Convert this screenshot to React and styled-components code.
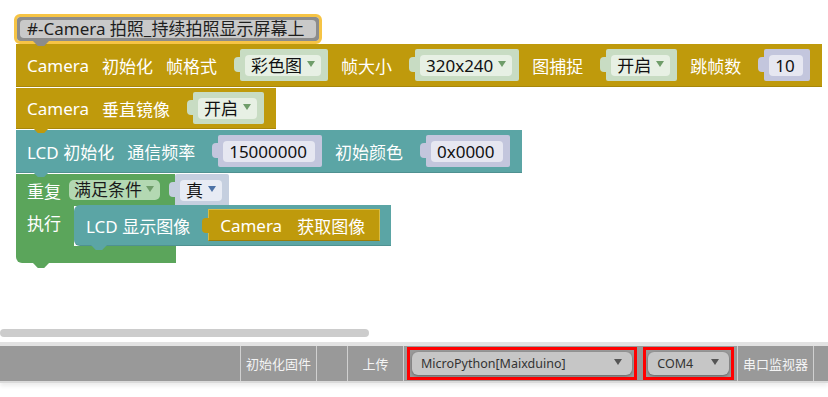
import React from 'react';
import styled, { createGlobalStyle } from 'styled-components';

const GlobalStyle = createGlobalStyle`
    body {
        margin: 0;
        background: #ffffff;
        font-family: "Noto Sans", "Noto Sans CJK SC", sans-serif;
    }
`;

const GOLD = '#BF9A0C';
const TEAL = '#5BA5A5';
const GREEN = '#5BA55B';

const Page = styled.div`
    width: 828px;
    height: 397px;
    overflow: hidden;
    background: #fff;
`;

const Workspace = styled.div`
    position: relative;
    height: 342px;
`;

const Stack = styled.div`
    position: absolute;
    left: 16px;
    top: 17px;
    display: flex;
    flex-direction: column;
    align-items: flex-start;
`;

const Tab = styled.span`
    position: absolute;
    left: ${(p) => p.$left || 17}px;
    bottom: -5px;
    width: 16px;
    height: 5px;
    background: ${(p) => p.$color};
    clip-path: polygon(0 0, 100% 0, 70% 100%, 30% 100%);
    z-index: 2;
`;

const CommentBlock = styled.div`
    position: relative;
    margin-left: 1px;
    margin-bottom: 3px;
    width: 302px;
    height: 24px;
    background: #8c8c8c;
    outline: 3px solid #f6c445;
    border-radius: 3px;
    display: flex;
    align-items: center;
    padding: 0 3px;
    box-sizing: border-box;
    z-index: 3;
`;

const CommentField = styled.div`
    flex: 1;
    height: 18px;
    line-height: 18px;
    background: #c9c9c9;
    border-radius: 4px;
    padding-left: 7px;
    font-size: 17px;
    color: #1e1e1e;
    white-space: nowrap;
`;

const Block = styled.div`
    position: relative;
    height: ${(p) => p.$h}px;
    background: ${(p) => p.$color};
    display: flex;
    align-items: center;
    gap: 13px;
    padding: 0 12px 0 11px;
    margin-bottom: ${(p) => p.$mb || 0}px;
    border-bottom: 1px solid rgba(0, 0, 0, 0.12);
    box-sizing: border-box;
    color: #fff;
    font-size: 17px;
    white-space: nowrap;
`;

const Label = styled.span`
    color: #fff;
`;

const Plug = styled.div`
    position: relative;
    height: ${(p) => p.$h || 32}px;
    background: ${(p) => p.$bg};
    display: flex;
    align-items: center;
    padding: 0 7px 0 5px;
    margin-left: ${(p) => p.$ml ?? 10}px;
    border-radius: 2px;
    box-sizing: border-box;

    &::before {
        content: '';
        position: absolute;
        left: -6px;
        top: 8px;
        width: 7px;
        height: 15px;
        background: ${(p) => p.$bg};
        border-radius: 4px 0 0 4px;
    }
`;

const Field = styled.div`
    height: 21px;
    line-height: 21px;
    background: ${(p) => p.$bg};
    border-radius: 4px;
    padding: 0 ${(p) => (p.$arrow ? 6 : 8)}px 0 6px;
    color: #111;
    font-size: 17px;
    display: flex;
    align-items: center;
    gap: 5px;
`;

const Arrow = styled.span`
    width: 0;
    height: 0;
    border-left: 4px solid transparent;
    border-right: 4px solid transparent;
    border-top: 6px solid ${(p) => p.$color};
    margin-top: -3px;
`;

const ReporterBlock = styled.div`
    position: relative;
    height: 32px;
    background: ${GOLD};
    border: 1px solid #d8bb45;
    border-bottom-color: #9c7d08;
    display: flex;
    align-items: center;
    gap: 15px;
    padding: 0 14px 0 11px;
    margin-left: 8px;
    box-sizing: border-box;
    color: #fff;
    font-size: 17px;

    &::before {
        content: '';
        position: absolute;
        left: -7px;
        top: 8px;
        width: 7px;
        height: 15px;
        background: ${GOLD};
        border-radius: 4px 0 0 4px;
    }
`;

const Repeat = styled.div`
    position: relative;
    display: flex;
    flex-direction: column;
    align-items: flex-start;
`;

const RepeatTop = styled.div`
    display: flex;
    align-items: flex-start;
`;

const GreenCap = styled.div`
    height: 32px;
    background: ${GREEN};
    display: flex;
    align-items: center;
    gap: 8px;
    padding: 0 15px 0 11px;
    color: #fff;
    font-size: 17px;
`;

const GreenField = styled.div`
    height: 20px;
    line-height: 20px;
    background: #b3d8b2;
    border-radius: 5px;
    padding: 0 6px 0 5px;
    color: #1a1a1a;
    font-size: 17px;
    display: flex;
    align-items: center;
    gap: 4px;
`;

const RepeatMiddle = styled.div`
    display: flex;
    margin-top: -2px;
`;

const Arm = styled.div`
    width: 58px;
    height: 41px;
    background: ${GREEN};
    color: #fff;
    font-size: 17px;
    padding: 5px 0 0 11px;
    box-sizing: border-box;
`;

const InnerBlock = styled(Block)`
    border-radius: 6px 0 0 6px;
    padding-left: 12px;
    gap: 10px;
    padding-right: 11px;
`;

const RepeatBottom = styled.div`
    position: relative;
    width: 160px;
    height: 17px;
    background: ${GREEN};
    border-radius: 0 0 0 6px;
`;

const Scrollbar = styled.div`
    position: absolute;
    left: 0;
    bottom: 5px;
    width: 369px;
    height: 8px;
    border-radius: 4px;
    background: #cccccc;
`;

const Toolbar = styled.div`
    height: 41px;
    box-sizing: border-box;
    border-top: 4px solid #e2e2e2;
    border-bottom: 2px solid #dadada;
    background: #999999;
    display: flex;
    justify-content: flex-end;
    box-shadow: 0 3px 4px rgba(0, 0, 0, 0.08);
`;

const Cell = styled.div`
    width: ${(p) => p.$w}px;
    border-left: ${(p) => (p.$sep ? '1px solid #d0d0d0' : 'none')};
    display: flex;
    align-items: center;
    justify-content: ${(p) => p.$justify || 'center'};
    gap: 6px;
    padding: 0 ${(p) => p.$pad || 0}px;
    box-sizing: border-box;
    color: #f4f4f4;
    font-size: 13px;
    font-family: "Noto Sans CJK SC", sans-serif;
`;

const RedBox = styled.div`
    width: ${(p) => p.$w}px;
    height: 33px;
    border: 3px solid #ff0000;
    box-sizing: border-box;
    padding: 2px 2px;
    display: flex;
`;

const Select = styled.div`
    flex: 1;
    background: #c6c6c6;
    border-radius: 6px;
    box-shadow: 0 1px 3px rgba(0, 0, 0, 0.35);
    display: flex;
    align-items: center;
    justify-content: space-between;
    padding: 0 10px 0 9px;
    color: #333;
    font-size: 12.5px;
    font-family: "Noto Sans", "Noto Sans CJK SC", sans-serif;
`;

function DropPlug({ text, bg, field, arrow, ml }) {
    return (
        <Plug $bg={bg} $ml={ml}>
            <Field $bg={field} $arrow>
                {text}
                <Arrow $color={arrow} />
            </Field>
        </Plug>
    );
}

function ValuePlug({ text, ml }) {
    return (
        <Plug $bg="#c3c6dd" $ml={ml}>
            <Field $bg="#e6e7f1">{text}</Field>
        </Plug>
    );
}

const greenPlug = { bg: '#c8dcc3', field: '#e7f0e4', arrow: '#6f9d6a' };

export default function App() {
    return (
        <Page>
            <GlobalStyle />
            <Workspace>
                <Stack>
                    <CommentBlock>
                        <CommentField>#-Camera 拍照_持续拍照显示屏幕上</CommentField>
                        <Tab $color="#8c8c8c" $left={16} />
                    </CommentBlock>

                    <Block $color={GOLD} $h={43} $mb={1}>
                        <Label>Camera</Label>
                        <Label>初始化</Label>
                        <Label>帧格式</Label>
                        <DropPlug text="彩色图" {...greenPlug} />
                        <Label>帧大小</Label>
                        <DropPlug text="320x240" {...greenPlug} />
                        <Label>图捕捉</Label>
                        <DropPlug text="开启" {...greenPlug} />
                        <Label>跳帧数</Label>
                        <ValuePlug text="10" />
                    </Block>

                    <Block $color={GOLD} $h={41} $mb={1}>
                        <Label>Camera</Label>
                        <Label>垂直镜像</Label>
                        <DropPlug text="开启" {...greenPlug} />
                        <Tab $color={GOLD} />
                    </Block>

                    <Block $color={TEAL} $h={43} $mb={1}>
                        <Label>LCD 初始化</Label>
                        <Label>通信频率</Label>
                        <ValuePlug text="15000000" />
                        <Label>初始颜色</Label>
                        <ValuePlug text="0x0000" />
                        <Tab $color={TEAL} />
                    </Block>

                    <Repeat>
                        <RepeatTop>
                            <GreenCap>
                                <span>重复</span>
                                <GreenField>
                                    满足条件
                                    <Arrow $color="#6f9d6a" />
                                </GreenField>
                            </GreenCap>
                            <Plug $bg="#c5cfdf" $ml={0} $h={33}>
                                <Field $bg="#e7ebf4" $arrow>
                                    真
                                    <Arrow $color="#4c72a6" />
                                </Field>
                            </Plug>
                        </RepeatTop>
                        <RepeatMiddle>
                            <Arm>执行</Arm>
                            <InnerBlock $color={TEAL} $h={41}>
                                <Label>LCD 显示图像</Label>
                                <ReporterBlock>
                                    <span>Camera</span>
                                    <span>获取图像</span>
                                </ReporterBlock>
                                <Tab $color={TEAL} />
                            </InnerBlock>
                        </RepeatMiddle>
                        <RepeatBottom>
                            <Tab $color={GREEN} />
                        </RepeatBottom>
                    </Repeat>
                </Stack>
                <Scrollbar />
            </Workspace>

            <Toolbar>
                <Cell $w={76} $sep>初始化固件</Cell>
                <Cell $w={31} $sep />
                <Cell $w={56} $sep>上传</Cell>
                <Cell $w={334} $sep $justify="flex-start" $pad={3}>
                    <RedBox $w={231}>
                        <Select>
                            <span>MicroPython[Maixduino]</span>
                            <Arrow $color="#555" />
                        </Select>
                    </RedBox>
                    <RedBox $w={91}>
                        <Select>
                            <span>COM4</span>
                            <Arrow $color="#555" />
                        </Select>
                    </RedBox>
                </Cell>
                <Cell $w={76} $sep>串口监视器</Cell>
                <Cell $w={15} $sep />
            </Toolbar>
        </Page>
    );
}
